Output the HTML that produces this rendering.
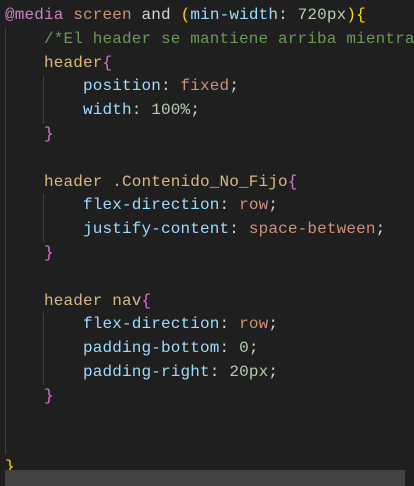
<!DOCTYPE html>
<html><head><meta charset="utf-8"><style>
html,body{margin:0;padding:0;background:#1f1f1f;width:414px;height:486px;overflow:hidden}
pre{margin:0;position:absolute;left:5px;top:4px;font-family:"Liberation Mono",monospace;font-size:16px;letter-spacing:0.15px;line-height:23.8px;color:#d4d4d4}
.k{color:#c586c0}.s{color:#ce9178}.y{color:#ffd700}.p{color:#9cdcfe}.n{color:#b5cea8}.c{color:#6a9955}.sel{color:#d7ba7d}.m{color:#da70d6}
.g{position:absolute;width:1px;background:#404040}
.sb{position:absolute;left:5px;top:470px;width:400px;height:16px;background:#424242}
</style></head><body>
<div class="g" style="left:5px;top:28px;height:426px"></div>
<div class="g" style="left:43px;top:76px;height:48px"></div>
<div class="g" style="left:43px;top:194px;height:48px"></div>
<div class="g" style="left:43px;top:313px;height:72px"></div>
<pre><span class="k">@media</span> <span class="s">screen</span> and <span class="y">(</span><span class="p">min-width</span>: <span class="n">720px</span><span class="y">){</span>
    <span class="c">/*El header se mantiene arriba mientras</span>
    <span class="sel">header</span><span class="m">{</span>
        <span class="p">position</span>: <span class="s">fixed</span>;
        <span class="p">width</span>: <span class="n">100%</span>;
    <span class="m">}</span>

    <span class="sel">header .Contenido_No_Fijo</span><span class="m">{</span>
        <span class="p">flex-direction</span>: <span class="s">row</span>;
        <span class="p">justify-content</span>: <span class="s">space-between</span>;
    <span class="m">}</span>

    <span class="sel">header nav</span><span class="m">{</span>
        <span class="p">flex-direction</span>: <span class="s">row</span>;
        <span class="p">padding-bottom</span>: <span class="n">0</span>;
        <span class="p">padding-right</span>: <span class="n">20px</span>;
    <span class="m">}</span>


<span class="y">}</span></pre>
<div class="sb"></div>
</body></html>
